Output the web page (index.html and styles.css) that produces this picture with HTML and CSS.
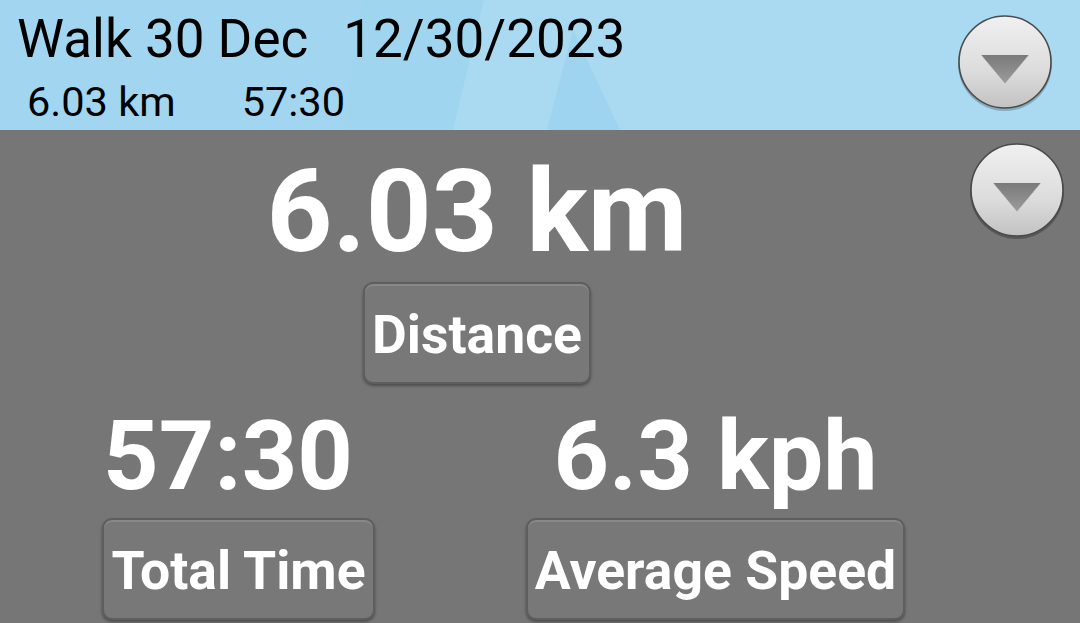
FILE: index.html
```html
<!DOCTYPE html>
<html>
<head>
<meta charset="utf-8">
<link rel="stylesheet" href="styles.css">
</head>
<body>
<div class="app">
  <header class="header">
    <svg class="header-bg" width="1080" height="130" viewBox="0 0 1080 130" aria-hidden="true">
      <rect width="1080" height="130" fill="#a2d6f0"/>
      <polygon points="362,0 1080,0 1080,130 343,130" fill="#a9daf1"/>
      <polygon points="484,0 453,130 343,130 362,0" fill="#a0d5ef"/>
      <polygon points="573,30 620,130 547,130" fill="#9ed4ef"/>
    </svg>
    <div class="header-text">
      <div class="title"><span>Walk 30 Dec</span><span>12/30/2023</span></div>
      <div class="subtitle"><span>6.03 km</span><span>57:30</span></div>
    </div>
    <button class="round-btn header-btn" aria-label="menu">
      <svg width="100" height="100" viewBox="0 0 100 100">
        <defs>
          <linearGradient id="g1" x1="0" y1="0" x2="0" y2="1">
            <stop offset="0" stop-color="#f0f0f0"/>
            <stop offset="0.6" stop-color="#dcdcdc"/>
            <stop offset="1" stop-color="#c2c2c2"/>
          </linearGradient>
          <linearGradient id="t1" x1="0" y1="0" x2="0" y2="1">
            <stop offset="0" stop-color="#7a7a7a"/>
            <stop offset="1" stop-color="#9c9c9c"/>
          </linearGradient>
        </defs>
        <circle cx="50" cy="53" r="47" fill="#3d5566" opacity="0.35"/>
        <circle cx="50" cy="51" r="46" fill="url(#g1)" stroke="#4a4a4a" stroke-width="1.6"/>
        <polygon points="26,44 74,44 50,73" fill="url(#t1)"/>
        <polyline points="26,44 50,73 74,44" fill="none" stroke="#d8d8d8" stroke-width="1" opacity="0.7"/>
      </svg>
    </button>
  </header>
  <main class="stats">
    <div class="content">
      <section class="stat stat-main">
        <div class="value value-lg">6.03 km</div>
        <div class="label">Distance</div>
      </section>
      <div class="row">
        <section class="stat">
          <div class="value value-md value-shift">57:30</div>
          <div class="label">Total Time</div>
        </section>
        <section class="stat">
          <div class="value value-md">6.3 kph</div>
          <div class="label">Average Speed</div>
        </section>
      </div>
    </div>
    <button class="round-btn body-btn" aria-label="options">
      <svg width="100" height="100" viewBox="0 0 100 100">
        <defs>
          <linearGradient id="g2" x1="0" y1="0" x2="0" y2="1">
            <stop offset="0" stop-color="#f0f0f0"/>
            <stop offset="0.6" stop-color="#dcdcdc"/>
            <stop offset="1" stop-color="#c2c2c2"/>
          </linearGradient>
          <linearGradient id="t2" x1="0" y1="0" x2="0" y2="1">
            <stop offset="0" stop-color="#7a7a7a"/>
            <stop offset="1" stop-color="#9c9c9c"/>
          </linearGradient>
        </defs>
        <circle cx="50" cy="52" r="47" fill="#333" opacity="0.45"/>
        <circle cx="50" cy="50" r="46" fill="url(#g2)" stroke="#4a4a4a" stroke-width="1.6"/>
        <polygon points="26,43 74,43 50,72" fill="url(#t2)"/>
        <polyline points="26,43 50,72 74,43" fill="none" stroke="#d8d8d8" stroke-width="1" opacity="0.7"/>
      </svg>
    </button>
  </main>
</div>
</body>
</html>
```

FILE: styles.css
```css
* { box-sizing: border-box; }
html, body {
  margin: 0;
  padding: 0;
  width: 1080px;
  height: 623px;
  overflow: hidden;
  background: #767676;
  font-family: Roboto, "Noto Sans", sans-serif;
}
.app {
  width: 1080px;
  height: 623px;
  display: flex;
  flex-direction: column;
}
.header {
  position: relative;
  height: 130px;
  flex: none;
  display: flex;
  justify-content: space-between;
  align-items: flex-start;
  overflow: hidden;
}
.header-bg {
  position: absolute;
  left: 0;
  top: 0;
}
.header-text {
  position: relative;
  padding: 13px 0 0 17px;
  color: #000;
}
.title {
  display: flex;
  gap: 35px;
  font-size: 53px;
  line-height: 1;
  font-weight: 400;
}
.subtitle {
  display: flex;
  gap: 66px;
  margin-top: 15px;
  padding-left: 10px;
  font-size: 41.5px;
  line-height: 1;
}
.round-btn {
  border: 0;
  padding: 0;
  margin: 0;
  background: none;
  width: 100px;
  height: 100px;
  display: block;
}
.round-btn svg { display: block; }
.header-btn {
  position: relative;
  margin: 11px 25px 0 0;
}
.stats {
  position: relative;
  flex: 1;
  display: grid;
  grid-template-columns: 954px 1fr;
  overflow: hidden;
}
.content {
  display: flex;
  flex-direction: column;
}
.body-btn {
  position: absolute;
  right: 13px;
  top: 10px;
}
.stat {
  display: flex;
  flex-direction: column;
  align-items: center;
}
.stat-main { margin-top: 24px; }
.value {
  color: #fff;
  font-weight: 700;
  line-height: 1;
  white-space: nowrap;
}
.value-lg { font-size: 115px; }
.value-md { font-size: 97px; margin-top: 24px; }
.value-shift { padding-right: 21px; }
.label {
  display: flex;
  align-items: center;
  justify-content: center;
  height: 102px;
  padding: 2px 7px 0;
  margin-top: 13px;
  border: 2px solid #5e5e5e;
  border-radius: 10px;
  background: #787878;
  box-shadow: inset 0 2px 0 rgba(255,255,255,0.12), 0 2px 3px rgba(0,0,0,0.35);
  color: #fff;
  font-weight: 700;
  font-size: 53.5px;
  white-space: nowrap;
}
.row {
  display: grid;
  grid-template-columns: 1fr 1fr;
}
```
